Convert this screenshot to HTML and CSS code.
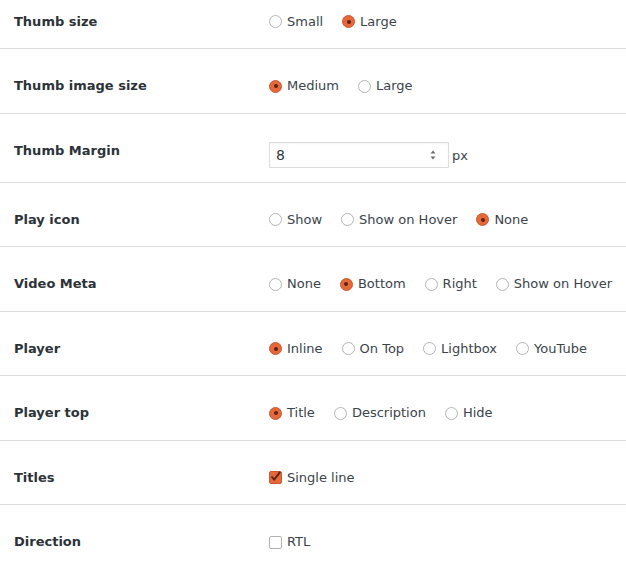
FILE: index.html
```html
<!DOCTYPE html>
<html>
<head>
<meta charset="utf-8">
<link rel="stylesheet" href="styles.css">
</head>
<body>
<div class="settings">
  <div class="row row-first">
    <div class="label">Thumb size</div>
    <div class="value">
      <label class="opt"><span class="radio"></span>Small</label>
      <label class="opt"><span class="radio on"></span>Large</label>
    </div>
  </div>
  <div class="row">
    <div class="label">Thumb image size</div>
    <div class="value">
      <label class="opt"><span class="radio on"></span>Medium</label>
      <label class="opt"><span class="radio"></span>Large</label>
    </div>
  </div>
  <div class="row row-input">
    <div class="label">Thumb Margin</div>
    <div class="value value-input">
      <div class="num">
        <span class="num-text">8</span>
        <svg class="spin" width="8" height="14" viewBox="0 0 8 14"><path d="M1.5 5.5 L4 2.5 L6.5 5.5 Z" fill="#6d6d6d"/><path d="M1.5 8.5 L4 11.5 L6.5 8.5 Z" fill="#6d6d6d"/></svg>
      </div>
      <span class="unit">px</span>
    </div>
  </div>
  <div class="row">
    <div class="label">Play icon</div>
    <div class="value">
      <label class="opt"><span class="radio"></span>Show</label>
      <label class="opt"><span class="radio"></span>Show on Hover</label>
      <label class="opt"><span class="radio on"></span>None</label>
    </div>
  </div>
  <div class="row">
    <div class="label">Video Meta</div>
    <div class="value">
      <label class="opt"><span class="radio"></span>None</label>
      <label class="opt"><span class="radio on"></span>Bottom</label>
      <label class="opt"><span class="radio"></span>Right</label>
      <label class="opt"><span class="radio"></span>Show on Hover</label>
    </div>
  </div>
  <div class="row">
    <div class="label">Player</div>
    <div class="value">
      <label class="opt"><span class="radio on"></span>Inline</label>
      <label class="opt"><span class="radio"></span>On Top</label>
      <label class="opt"><span class="radio"></span>Lightbox</label>
      <label class="opt"><span class="radio"></span>YouTube</label>
    </div>
  </div>
  <div class="row">
    <div class="label">Player top</div>
    <div class="value">
      <label class="opt"><span class="radio on"></span>Title</label>
      <label class="opt"><span class="radio"></span>Description</label>
      <label class="opt"><span class="radio"></span>Hide</label>
    </div>
  </div>
  <div class="row">
    <div class="label">Titles</div>
    <div class="value">
      <label class="opt"><span class="check on"><svg width="13" height="13" viewBox="0 0 13 13"><path d="M2.5 6.5 L5.2 9.6 L11.2 1.8" fill="none" stroke="#5a2414" stroke-width="1.9"/></svg></span>Single line</label>
    </div>
  </div>
  <div class="row row-last">
    <div class="label">Direction</div>
    <div class="value">
      <label class="opt"><span class="check"></span>RTL</label>
    </div>
  </div>
</div>
</body>
</html>
```
FILE: styles.css
```css
html, body {
  margin: 0;
  padding: 0;
  background: #fff;
}
body {
  font-family: "DejaVu Sans", sans-serif;
  font-size: 13px;
  color: #3c434a;
}
.settings {
  width: 626px;
}
.row {
  display: flex;
  align-items: flex-start;
  padding: 28px 0 17.5px;
  border-bottom: 1px solid #dcdcde;
  line-height: 18px;
}
.row-first {
  padding-top: 12.5px;
}
.row-input {
  padding-bottom: 14px;
}
.row-last {
  border-bottom: none;
}
.label {
  width: 255px;
  padding-left: 14px;
  font-weight: bold;
  color: #2c3338;
  flex: none;
}
.value {
  display: flex;
  align-items: center;
  gap: 19px;
}
.value-input {
  gap: 3px;
}
.opt {
  display: flex;
  align-items: center;
  gap: 5px;
}
.radio {
  width: 11px;
  height: 11px;
  border: 1px solid #b4b4b4;
  border-radius: 50%;
  background: #fff;
  position: relative;
  flex: none;
}
.radio.on {
  background: #e5673c;
  border-color: #d0582f;
}
.radio.on::after {
  content: "";
  position: absolute;
  left: 3.5px;
  top: 3.5px;
  width: 4px;
  height: 4px;
  border-radius: 50%;
  background: #5e2212;
}
.check {
  width: 11px;
  height: 11px;
  border: 1px solid #b4b4b4;
  border-radius: 2px;
  background: #fff;
  flex: none;
  position: relative;
}
.check.on {
  background: #e5673c;
  border-color: #d0582f;
}
.check svg {
  position: absolute;
  left: -1px;
  top: -2px;
}
.num {
  width: 180px;
  height: 26px;
  box-sizing: border-box;
  border: 1px solid #dddddd;
  display: flex;
  align-items: center;
  justify-content: space-between;
  padding: 0 11px 0 6px;
  color: #32373c;
  font-size: 14px;
  box-shadow: inset 0 1px 2px rgba(0,0,0,0.04);
}
.unit {
  margin-top: 2px;
}
```
